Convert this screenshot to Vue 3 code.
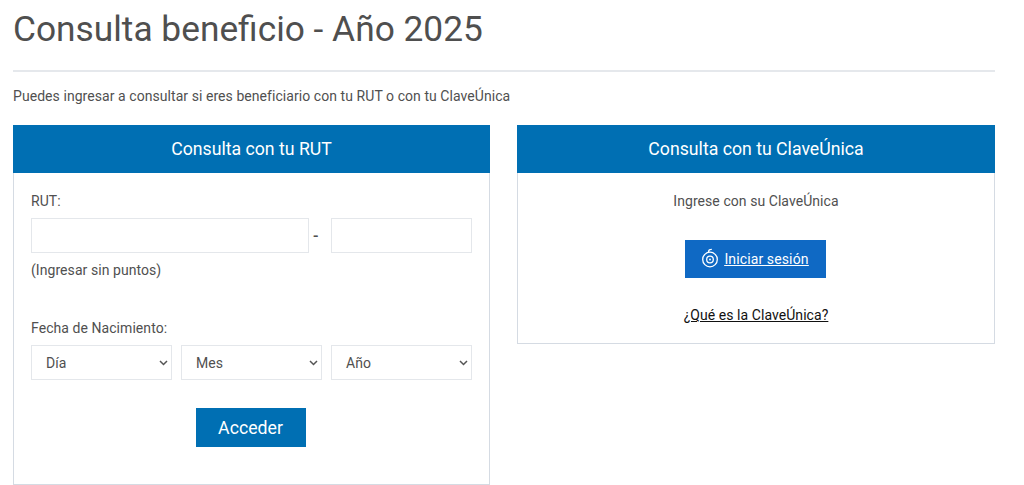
<script setup>
const dateFields = ['Día', 'Mes', 'Año']
</script>

<template>
  <main class="page">
    <h1 class="title">Consulta beneficio - Año 2025</h1>
    <hr class="rule" />
    <p class="intro">Puedes ingresar a consultar si eres beneficiario con tu RUT o con tu ClaveÚnica</p>
    <div class="columns">
      <section class="card card-rut">
        <h2 class="card-head">Consulta con tu RUT</h2>
        <form class="card-body rut-body" @submit.prevent>
          <label class="label">RUT:</label>
          <div class="rut-row">
            <input class="field rut-main" type="text" />
            <span class="dash">-</span>
            <input class="field rut-dv" type="text" />
          </div>
          <p class="hint">(Ingresar sin puntos)</p>
          <label class="label birth-label">Fecha de Nacimiento:</label>
          <div class="date-row">
            <div v-for="f in dateFields" :key="f" class="select">
              <span>{{ f }}</span>
              <svg class="chev" width="9" height="6" viewBox="0 0 9 6" fill="none">
                <path d="M1 1l3.5 3.5L8 1" stroke="#555" stroke-width="1.5" />
              </svg>
            </div>
          </div>
          <div class="submit-row">
            <button class="submit" type="submit">Acceder</button>
          </div>
        </form>
      </section>
      <section class="card card-clave">
        <h2 class="card-head">Consulta con tu ClaveÚnica</h2>
        <div class="card-body clave-body">
          <p class="clave-text">Ingrese con su ClaveÚnica</p>
          <a class="login" href="#" @click.prevent>
            <svg class="login-icon" width="18" height="20" viewBox="0 0 18 20" fill="none" stroke="#fff">
              <circle cx="9" cy="11.5" r="7.3" stroke-width="1.3" />
              <circle cx="9" cy="11.5" r="3.3" stroke-width="1.3" />
              <circle cx="9" cy="11.5" r="0.9" fill="#fff" stroke="none" />
              <path d="M7.6 4.2V3.4C7.6 2 8.6 1.3 10.8 1.3" stroke-width="1.3" />
            </svg>
            <span class="login-text">Iniciar sesión</span>
          </a>
          <a class="what" href="#" @click.prevent>¿Qué es la ClaveÚnica?</a>
        </div>
      </section>
    </div>
  </main>
</template>

<style>
html, body { margin: 0; background: #fff; overflow: hidden; }
</style>

<style scoped>
.page {
  width: 982px;
  padding: 0 29px 0 13px;
  font-family: Roboto, sans-serif;
  color: #505050;
  font-size: 14px;
  letter-spacing: 0.06px;
}
.title {
  margin: 0;
  padding-top: 8px;
  font-size: 35.3px;
  line-height: 42px;
  font-weight: 400;
  letter-spacing: 0;
  color: #4f4f4f;
}
.rule {
  margin: 20px 0 0;
  border: 0;
  height: 2px;
  background: #e5e8ec;
}
.intro {
  margin: 16px 0 0;
  line-height: 17px;
}
.columns {
  display: flex;
  justify-content: space-between;
  align-items: flex-start;
  margin-top: 20px;
}
.card {
  box-sizing: border-box;
  border: 1px solid #d5dbe3;
  border-top: 0;
}
.card-rut { width: 477px; height: 360px; }
.card-clave { width: 478px; height: 219px; }
.card-head {
  margin: 0 -1px;
  height: 48px;
  background: #006fb3;
  color: #fff;
  font-size: 17.7px;
  font-weight: 400;
  letter-spacing: 0;
  line-height: 48px;
  text-align: center;
}
.rut-body { padding: 20px 17px 0 17px; }
.label { display: block; line-height: 17px; }
.rut-row { display: flex; align-items: center; margin-top: 8px; }
.field {
  box-sizing: border-box;
  height: 35px;
  border: 1px solid #e4e7eb;
  background: #fff;
  outline: none;
  padding: 0;
}
.rut-main { width: 278px; }
.dash {
  width: 22px;
  box-sizing: border-box;
  padding-left: 4px;
  font-size: 16px;
  font-weight: 500;
}
.rut-dv { width: 141px; }
.hint { margin: 9px 0 0; line-height: 17px; }
.birth-label { margin-top: 41px; }
.date-row { display: flex; gap: 9px; margin-top: 8px; }
.select {
  box-sizing: border-box;
  width: 141px;
  height: 35px;
  border: 1px solid #e4e7eb;
  display: flex;
  align-items: center;
  justify-content: space-between;
  padding: 0 3px 0 14px;
}
.chev { display: block; }
.submit-row { display: flex; justify-content: center; margin-top: 28px; padding-right: 2px; }
.submit {
  width: 110px;
  height: 39px;
  border: 0;
  background: #006fb3;
  color: #fff;
  font: 400 17.7px Roboto, sans-serif;
  padding: 0;
}
.clave-body {
  display: flex;
  flex-direction: column;
  align-items: center;
  padding-top: 20px;
}
.clave-text { margin: 0; line-height: 17px; }
.login {
  display: flex;
  align-items: center;
  justify-content: center;
  gap: 5px;
  width: 141px;
  height: 38px;
  margin: 30px 2px 0 0;
  background: #0f69c4;
  color: #fff;
}
.login-text { text-decoration: underline; color: #fff; letter-spacing: 0.12px; }
.login-icon { display: block; margin-top: -2px; }
.what { margin-top: 29px; line-height: 17px; color: #111; text-decoration: underline; }
</style>
